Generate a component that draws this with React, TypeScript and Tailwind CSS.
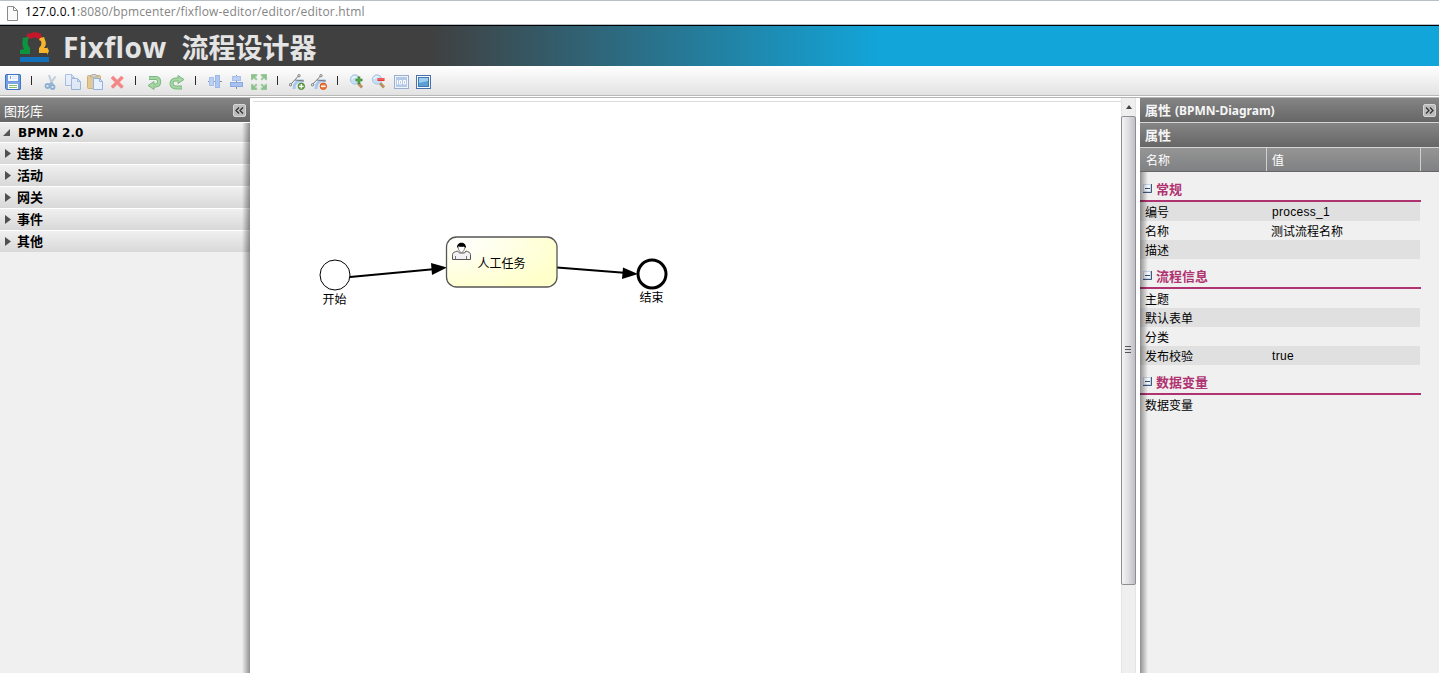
import type { ReactNode } from 'react';

const Icon = ({ children, faded = false }: { children: ReactNode; faded?: boolean }) => (
  <svg width="16" height="16" viewBox="0 0 16 16" fill="none" className={faded ? 'shrink-0 opacity-50' : 'shrink-0'}>
    {children}
  </svg>
);

const Separator = () => (
  <div className="flex h-4 w-[10px] shrink-0 justify-center">
    <div className="mt-0.5 mr-px h-[9px] w-px bg-[#30262a]" />
  </div>
);

const SaveIcon = () => (
  <Icon>
    <path d="M1 .5h14l.5.5v14l-.5.5H1.500l-1-1V1z" fill="#6f9be0" stroke="#3f74c4" />
    <path d="M3 1h10v6H3z" fill="#f4f8fd" />
    <path d="M5.500 2v3" stroke="#7aa1dc" />
    <path d="M7 2.500h5M7 4.500h5" stroke="#dbe6f5" />
    <path d="M1.500 8h13v2h-13z" fill="#7ea7e6" />
    <path d="M3 10h10v5H3z" fill="#fff" />
    <path d="M4 11.500h8M4 13.500h8" stroke="#86c065" />
  </Icon>
);

const CutIcon = () => (
  <Icon faded>
    <path d="M6 1l3 9M12.500 2.500L6.500 10.500" stroke="#8fa9c4" strokeWidth="2" />
    <circle cx="4.500" cy="12" r="2" stroke="#2f76be" strokeWidth="1.800" />
    <circle cx="9.500" cy="13" r="2" stroke="#2f76be" strokeWidth="1.800" />
    <path d="M6 10.500l3-1.500L10 11" stroke="#2f76be" strokeWidth="1.500" />
  </Icon>
);

const CopyIcon = () => (
  <Icon faded>
    <path d="M.5.5h6l3 3v8h-9z" fill="#e0ebff" stroke="#5e8ed8" />
    <path d="M6.500.5v3h3" stroke="#5e8ed8" />
    <path d="M6.500 4.500h6l3 3v8h-9z" fill="#d5e4ff" stroke="#4c7fce" />
    <path d="M12.500 4.500v3h3" stroke="#4c7fce" />
  </Icon>
);

const PasteIcon = () => (
  <Icon>
    <rect x=".5" y="1.500" width="13" height="13" rx="1" fill="#e4c896" stroke="#cfae7a" />
    <path d="M3.500 3V1.500H5V.5h4v1h1.500V3z" fill="#d6d8da" stroke="#b5b1aa" />
    <path d="M6.500 4.500h6l3 3v8h-9z" fill="#e6f0ff" stroke="#94b3e2" />
    <path d="M12.500 4.500v3h3" stroke="#94b3e2" />
  </Icon>
);

const DeleteIcon = () => (
  <Icon>
    <path d="M3 3l10.500 10.500M13.500 3L3 13.500" stroke="#f09a9a" strokeWidth="3.800" />
    <path d="M3 3l10.500 10.500M13.500 3L3 13.500" stroke="#f48584" strokeWidth="2.200" />
  </Icon>
);

const UndoIcon = () => (
  <Icon>
    <path d="M2 4h7a3.800 3.800 0 010 7.500H6" stroke="#7ab986" strokeWidth="4" />
    <path d="M7 7.500v8L1 11.500z" fill="#a9d6a0" stroke="#7ab986" />
    <path d="M2.500 4H9a3.800 3.800 0 010 7.500H5" stroke="#a9d6a0" strokeWidth="2.200" />
  </Icon>
);

const RedoIcon = () => (
  <Icon>
    <path d="M13 13.500H6.500a4 4 0 010-8H10" stroke="#7ab986" strokeWidth="4" />
    <path d="M9 1.500v8l6-4z" fill="#a9d6a0" stroke="#7ab986" />
    <path d="M12.500 13.500h-6a4 4 0 010-8H11" stroke="#a9d6a0" strokeWidth="2.200" />
  </Icon>
);

const AlignRowIcon = () => (
  <Icon>
    <path d="M1 7.500h14" stroke="#8690a0" />
    <rect x="2.500" y="3.500" width="4" height="8" fill="#b9cff3" stroke="#a8c0ec" />
    <rect x="8.500" y="1.500" width="4" height="12" fill="#b0c7f0" stroke="#9cb7e8" />
  </Icon>
);

const AlignColumnIcon = () => (
  <Icon>
    <path d="M7.500 1v14" stroke="#8690a0" />
    <rect x="3.500" y="2.500" width="8" height="4" fill="#b9cff3" stroke="#a8c0ec" />
    <rect x="1.500" y="8.500" width="12" height="4" fill="#a8c1ee" stroke="#8aa9e0" />
  </Icon>
);

const ResizeIcon = () => (
  <Icon>
    {['M0 0h6v2L4 3l2 1.500V6H4.500L3 4 1.500 6H0z', 'M16 0h-6v2l2 1-2 1.500V6h1.500L13 4l1.500 2H16z', 'M0 16h6v-2l-2-1 2-1.500V10H4.500L3 12l-1.500-2H0z', 'M16 16h-6v-2l2-1-2-1.500V10h1.500l1.500 2 1.500-2H16z'].map((d) => (
      <path key={d} d={d} fill="#8cc08c" stroke="#b7d9b3" strokeWidth=".6" />
    ))}
  </Icon>
);

const DockerShape = () => (
  <>
    <path d="M5 15c0-5 2-9 9.500-8" stroke="#a6c8ee" strokeWidth="3" />
    <path d="M1.500 10.500L9.500 2M6 6l9 1" stroke="#777" />
    <circle cx="1.500" cy="10.800" r="1.200" fill="#eee" stroke="#666" strokeWidth=".8" />
    <circle cx="10" cy="1.700" r="1.200" fill="#eee" stroke="#666" strokeWidth=".8" />
  </>
);

const AddDockerIcon = () => (
  <Icon>
    <DockerShape />
    <circle cx="12.300" cy="12.300" r="3.200" fill="#6fa84f" stroke="#55883c" />
    <path d="M12.300 10v4.600M10 12.300h4.600" stroke="#fff" strokeWidth="1.300" />
  </Icon>
);

const RemoveDockerIcon = () => (
  <Icon>
    <DockerShape />
    <circle cx="12.300" cy="12.300" r="3.200" fill="#ed7a38" stroke="#d8581f" />
    <path d="M10 12.300h4.600" stroke="#fff" strokeWidth="1.500" />
  </Icon>
);

const LensShape = () => (
  <>
    <path d="M9 9l4 4.500" stroke="#b8935f" strokeWidth="3" />
    <circle cx="6" cy="5.500" r="4.700" fill="#c6def3" stroke="#a9c5e2" />
    <path d="M3 5C4 2.500 6 2.500 7.500 3" stroke="#edf6ff" strokeWidth="1.500" />
  </>
);

const ZoomInIcon = () => (
  <Icon>
    <LensShape />
    <path d="M10 2.500v7.500M6.500 6h7" stroke="#3e8b36" strokeWidth="2.600" />
    <path d="M10 3.500v5.500M7.500 6h5" stroke="#64ac50" />
  </Icon>
);

const ZoomOutIcon = () => (
  <Icon>
    <LensShape />
    <path d="M6.500 5.500h7" stroke="#ed3a39" strokeWidth="3" />
    <path d="M7 5h6" stroke="#f77978" />
  </Icon>
);

const ActualSizeIcon = () => (
  <Icon>
    <rect x="1.500" y="1.500" width="14" height="13" fill="#eef4fb" stroke="#9caed0" />
    <rect x="3" y="3" width="11" height="10" fill="#b3c9e6" />
    <path d="M4.500 6v4.500M6.500 6.500h2V10h-2zM10.500 6.500h2V10h-2z" stroke="#fff" />
  </Icon>
);

const FitIcon = () => (
  <Icon>
    <rect x="1.500" y="1.500" width="14" height="13" fill="#f5faff" stroke="#4a70ac" />
    <rect x="3.500" y="3.500" width="10" height="9" fill="#5b9ed4" stroke="#4478b4" />
    <path d="M4 4h9v3L4 9z" fill="#9bcdec" />
  </Icon>
);

const Logo = () => (
  <svg width="30" height="30" viewBox="0 0 30 30" className="shrink-0">
    <path d="M7 1l2 1c4-2.500 8-2.500 12 0l1 4-4 1c-2-2-5-2-7 0L7 6z" fill="#c51729" />
    <path d="M2 6l7-1-1 3c-1 3 0 6 2 8v6H0v-4l4-1C2 14 2 11 3 7z" fill="#0c953e" />
    <path d="M20 6l4-1 1 3c1.500 3 1 6-1 8h3v-1l2 4-2 4v-2h-8v-5c2-2 3-4 2-7l-2-1z" fill="#f7b52b" />
    <path d="M0 25h29v5H0z" fill="#1270bb" />
  </svg>
);

const CollapseButton = ({ right = false }: { right?: boolean }) => (
  <button className="flex h-[13px] w-[13px] shrink-0 items-center justify-center rounded-[2px] border border-[#d6d6d6] bg-[#bcbcbc]">
    <svg width="9" height="7" viewBox="0 0 9 7" fill="none" className={right ? 'rotate-180' : ''}>
      <path d="M4 .5l-3 3 3 3M8 .5l-3 3 3 3" stroke="#333" strokeWidth="1.300" />
    </svg>
  </button>
);

const shapeGroups = ['连接', '活动', '网关', '事件', '其他'];

const propertyGroups: { title: string; rows: { name: string; value?: string; latin?: boolean; shaded?: boolean }[] }[] = [
  {
    title: '常规',
    rows: [
      { name: '编号', value: 'process_1', latin: true, shaded: true },
      { name: '名称', value: '测试流程名称' },
      { name: '描述', shaded: true },
    ],
  },
  {
    title: '流程信息',
    rows: [
      { name: '主题' },
      { name: '默认表单', shaded: true },
      { name: '分类' },
      { name: '发布校验', value: 'true', latin: true, shaded: true },
    ],
  },
  { title: '数据变量', rows: [{ name: '数据变量' }] },
];

const AddressBar = () => (
  <div className="h-[26px] shrink-0 border-b border-black bg-white">
    <div className="flex h-[25px] items-center border-y border-[#b9bfc6] pl-[7px]">
      <svg width="11" height="15" viewBox="0 0 11 15" fill="none" className="mt-px shrink-0">
        <path d="M.5.5h6l4 4v10H.5z" fill="#fafafa" stroke="#8b8b8b" />
        <path d="M6.500.5v4h4" stroke="#8b8b8b" />
      </svg>
      <span className="mb-px ml-[7px] font-['Open_Sans',sans-serif] text-[12px] leading-4 tracking-[0.155px] whitespace-nowrap text-[#858585]">
        <span className="text-black">127.0.0.1</span>:8080/bpmcenter/fixflow-editor/editor/editor.html
      </span>
    </div>
  </div>
);

const Banner = () => (
  <header className="flex h-10 shrink-0 items-center bg-[linear-gradient(90deg,#404040_0px,#404040_430px,#12a5d9_880px,#12a5d9_100%)] pl-5 text-[#e4e4e4]">
    <div className="mt-0.5">
      <Logo />
    </div>
    <h1 className="mt-0.5 ml-[13px] flex items-center font-bold whitespace-nowrap">
      <span className="font-['Open_Sans',sans-serif] text-[28px] leading-9 tracking-[0.4px]">Fixflow</span>
      <span className="ml-[15px] font-['Noto_Sans_CJK_SC',sans-serif] text-[27px] leading-9">流程设计器</span>
    </h1>
  </header>
);

const Toolbar = () => (
  <div className="flex h-8 shrink-0 items-start gap-1.5 border-b border-[#b5b3b5] bg-[linear-gradient(180deg,#ffffff_0px,#e2e2e2_29px,#b8b8b8_29px,#b8b8b8_30px,#ffffff_30px)] pt-2 pl-[5px]">
    <SaveIcon />
    <Separator />
    <CutIcon />
    <CopyIcon />
    <PasteIcon />
    <DeleteIcon />
    <Separator />
    <UndoIcon />
    <RedoIcon />
    <Separator />
    <AlignRowIcon />
    <AlignColumnIcon />
    <ResizeIcon />
    <Separator />
    <AddDockerIcon />
    <RemoveDockerIcon />
    <Separator />
    <ZoomInIcon />
    <ZoomOutIcon />
    <ActualSizeIcon />
    <FitIcon />
  </div>
);

const ShapeLibrary = () => (
  <aside className="relative flex w-[250px] shrink-0 flex-col bg-[#f0f0f0] font-['DejaVu_Sans','Noto_Sans_CJK_SC',sans-serif]">
    <div className="flex h-[25px] shrink-0 items-center justify-between border-b border-white bg-linear-to-b from-[#858585] to-[#666] pr-1 pl-1 text-[13px] text-white">
      <span className="pt-[3px] leading-[21px]">图形库</span>
      <CollapseButton />
    </div>
    <div className="flex h-5 shrink-0 items-center border-b border-white bg-linear-to-b from-[#f0f0f0] to-[#d8d8d8] pl-[3px] text-black">
      <svg width="8" height="8" viewBox="0 0 8 8">
        <path d="M7 0v7H0z" fill="#555" />
      </svg>
      <span className="ml-[7px] text-[12px] leading-4 font-bold">BPMN 2.0</span>
    </div>
    {shapeGroups.map((group) => (
      <div key={group} className="flex h-[22px] shrink-0 items-center border-b border-white bg-linear-to-b from-[#f0f0f0] to-[#d8d8d8] pl-[5px] text-black last-of-type:h-[21px] last-of-type:border-0">
        <svg width="6" height="9" viewBox="0 0 6 9" className="mb-px">
          <path d="M0 0l6 4.500L0 9z" fill="#505050" />
        </svg>
        <span className="ml-1.5 text-[13px] leading-5 font-bold">{group}</span>
      </div>
    ))}
    <span className="absolute right-0 bottom-0 top-[25px] w-2 bg-linear-to-r from-transparent to-black/40" />
  </aside>
);

const Diagram = () => (
  <svg width="871" height="572" viewBox="250 101 871 572" className="block" fill="none" fontFamily="'Noto Sans CJK SC', sans-serif">
    <defs>
      <radialGradient id="task" cx="0.1" cy="0.1" r="1">
        <stop offset="0" stopColor="#ffffff" />
        <stop offset="1" stopColor="#ffffcc" />
      </radialGradient>
    </defs>
    <circle cx="335" cy="275" r="15" fill="#fff" stroke="#000" />
    <path d="M350 277L433 269.200M557 267.500L624 272.800" stroke="#000" strokeWidth="2" />
    <path d="M431 263l16 4.500-15 7.500zM623 267.500l15 6.500-16 5z" fill="#000" />
    <rect x="446.500" y="237" width="110.500" height="50" rx="10" fill="url(#task)" stroke="#555" strokeWidth="1.300" />
    <path d="M452.500 259.500v-5c0-2 2-2.500 5-3.500l2 2h5l1.500-2c2.500 1 4.500 1.500 4.500 3.500v5z" fill="#f1f1f3" stroke="#555" />
    <path d="M455.500 259v-3M466.500 259v-3" stroke="#777" />
    <path d="M458 246c0 3 1 4 1.500 5l2 2 2-2c.5-1 1.500-2 1.500-5z" fill="#fff" stroke="#555" strokeWidth=".8" />
    <path d="M457 248c-.5-7 9.500-7 9 0l-2-1.500c-2 .5-4 .5-5.500-.5z" fill="#000" />
    <circle cx="652" cy="274" r="14" fill="#fff" stroke="#000" strokeWidth="3" />
    <g fill="#000" fontSize="12" textAnchor="middle">
      <text x="501.500" y="268">人工任务</text>
      <text x="334.500" y="304">开始</text>
      <text x="651.500" y="302">结束</text>
    </g>
  </svg>
);

const Canvas = () => (
  <main className="flex min-w-0 flex-1 bg-white pr-1">
    <div className="min-w-0 flex-1 pt-[3px]">
      <div className="ml-[3px] h-0">
        <div className="h-px bg-[#dcdcdc]" />
      </div>
      <Diagram />
    </div>
    <div className="flex w-[15px] shrink-0 flex-col border-x border-[#e4e4e4] bg-[#efefef]">
      <div className="flex h-[18px] shrink-0 items-center justify-center">
        <svg width="6" height="4" viewBox="0 0 6 4">
          <path d="M0 4l3-4 3 4z" fill="#444" />
        </svg>
      </div>
      <div className="-mx-px flex h-[469px] shrink-0 items-center justify-center rounded-[2px] border border-[#8f8f93] bg-linear-to-r from-[#f4f4f5] via-[#dedee1] to-[#bfbfc5]">
        <div className="mr-px mb-0.5 flex flex-col gap-0.5">
          <div className="h-px w-1.5 bg-[#555]" />
          <div className="h-px w-1.5 bg-[#555]" />
          <div className="h-px w-1.5 bg-[#555]" />
        </div>
      </div>
    </div>
  </main>
);

const CollapseBox = () => (
  <svg width="9" height="9" viewBox="0 0 9 9" fill="none" className="block">
    <rect width="9" height="9" fill="#c5d3e6" />
    <path d="M1 1h6v6H1z" fill="#f5f8fc" />
    <path d="M8.500 0v8.500H0" stroke="#40597b" />
    <path d="M2 4.500h5" stroke="#354e70" />
  </svg>
);

const Properties = () => (
  <aside className="relative flex w-[299px] shrink-0 flex-col bg-[#f0f0f0] font-['Liberation_Sans','Noto_Sans_CJK_SC',sans-serif]">
    <div className="flex h-[25px] shrink-0 items-center justify-between border-b border-[#d5d5d5] bg-linear-to-b from-[#858585] to-[#666] pr-[3px] pl-[5px] font-bold text-[#f5f5f5]">
      <span className="flex items-center gap-1 pt-0.5 leading-[22px] whitespace-nowrap">
        <span className="text-[13px]">属性</span>
        <span className="font-['Noto_Sans',sans-serif] text-[12px]">(BPMN-Diagram)</span>
      </span>
      <CollapseButton right />
    </div>
    <div className="h-[25px] shrink-0 border-b border-[#d5d5d5] bg-linear-to-b from-[#858585] to-[#666] pt-0.5 pl-[5px] text-[13px] leading-[22px] font-bold text-[#f5f5f5]">属性</div>
    <div className="flex h-6 shrink-0 border-b border-[#666] bg-linear-to-b from-[#959595] to-[#808183] text-[12px] leading-[26px] text-white">
      <div className="w-[127px] border-r border-[#d0d0d0] pl-[6px]">名称</div>
      <div className="w-[154px] border-r border-[#d0d0d0] pl-[5px]">值</div>
    </div>
    {propertyGroups.map((group) => (
      <section key={group.title} className="w-[281px] shrink-0">
        <div className="flex h-[30px] items-end border-b-2 border-[#b03371] pl-[3px]">
          <span className="mb-[7px]">
            <CollapseBox />
          </span>
          <h2 className="ml-1 text-[13px] leading-5 font-bold text-[#b03371]">{group.title}</h2>
        </div>
        {group.rows.map((row) => (
          <div key={row.name} className={row.shaded ? 'mr-px flex h-[19px] bg-[#e0e0e0] text-[12px] leading-[22px] text-black' : 'mr-px flex h-[19px] text-[12px] leading-[22px] text-black'}>
            <span className="w-[131px] pl-[5px]">{row.name}</span>
            <span className={row.latin ? 'pl-px leading-[20px] tracking-[0.3px]' : ''}>{row.value}</span>
          </div>
        ))}
      </section>
    ))}
    <span className="absolute top-[74px] bottom-0 left-0 w-2 bg-linear-to-l from-transparent to-black/40" />
  </aside>
);

export default function App() {
  return (
    <div className="flex h-[673px] w-[1439px] flex-col overflow-hidden bg-white">
      <AddressBar />
      <Banner />
      <Toolbar />
      <div className="flex min-h-0 flex-1">
        <ShapeLibrary />
        <Canvas />
        <Properties />
      </div>
    </div>
  );
}
